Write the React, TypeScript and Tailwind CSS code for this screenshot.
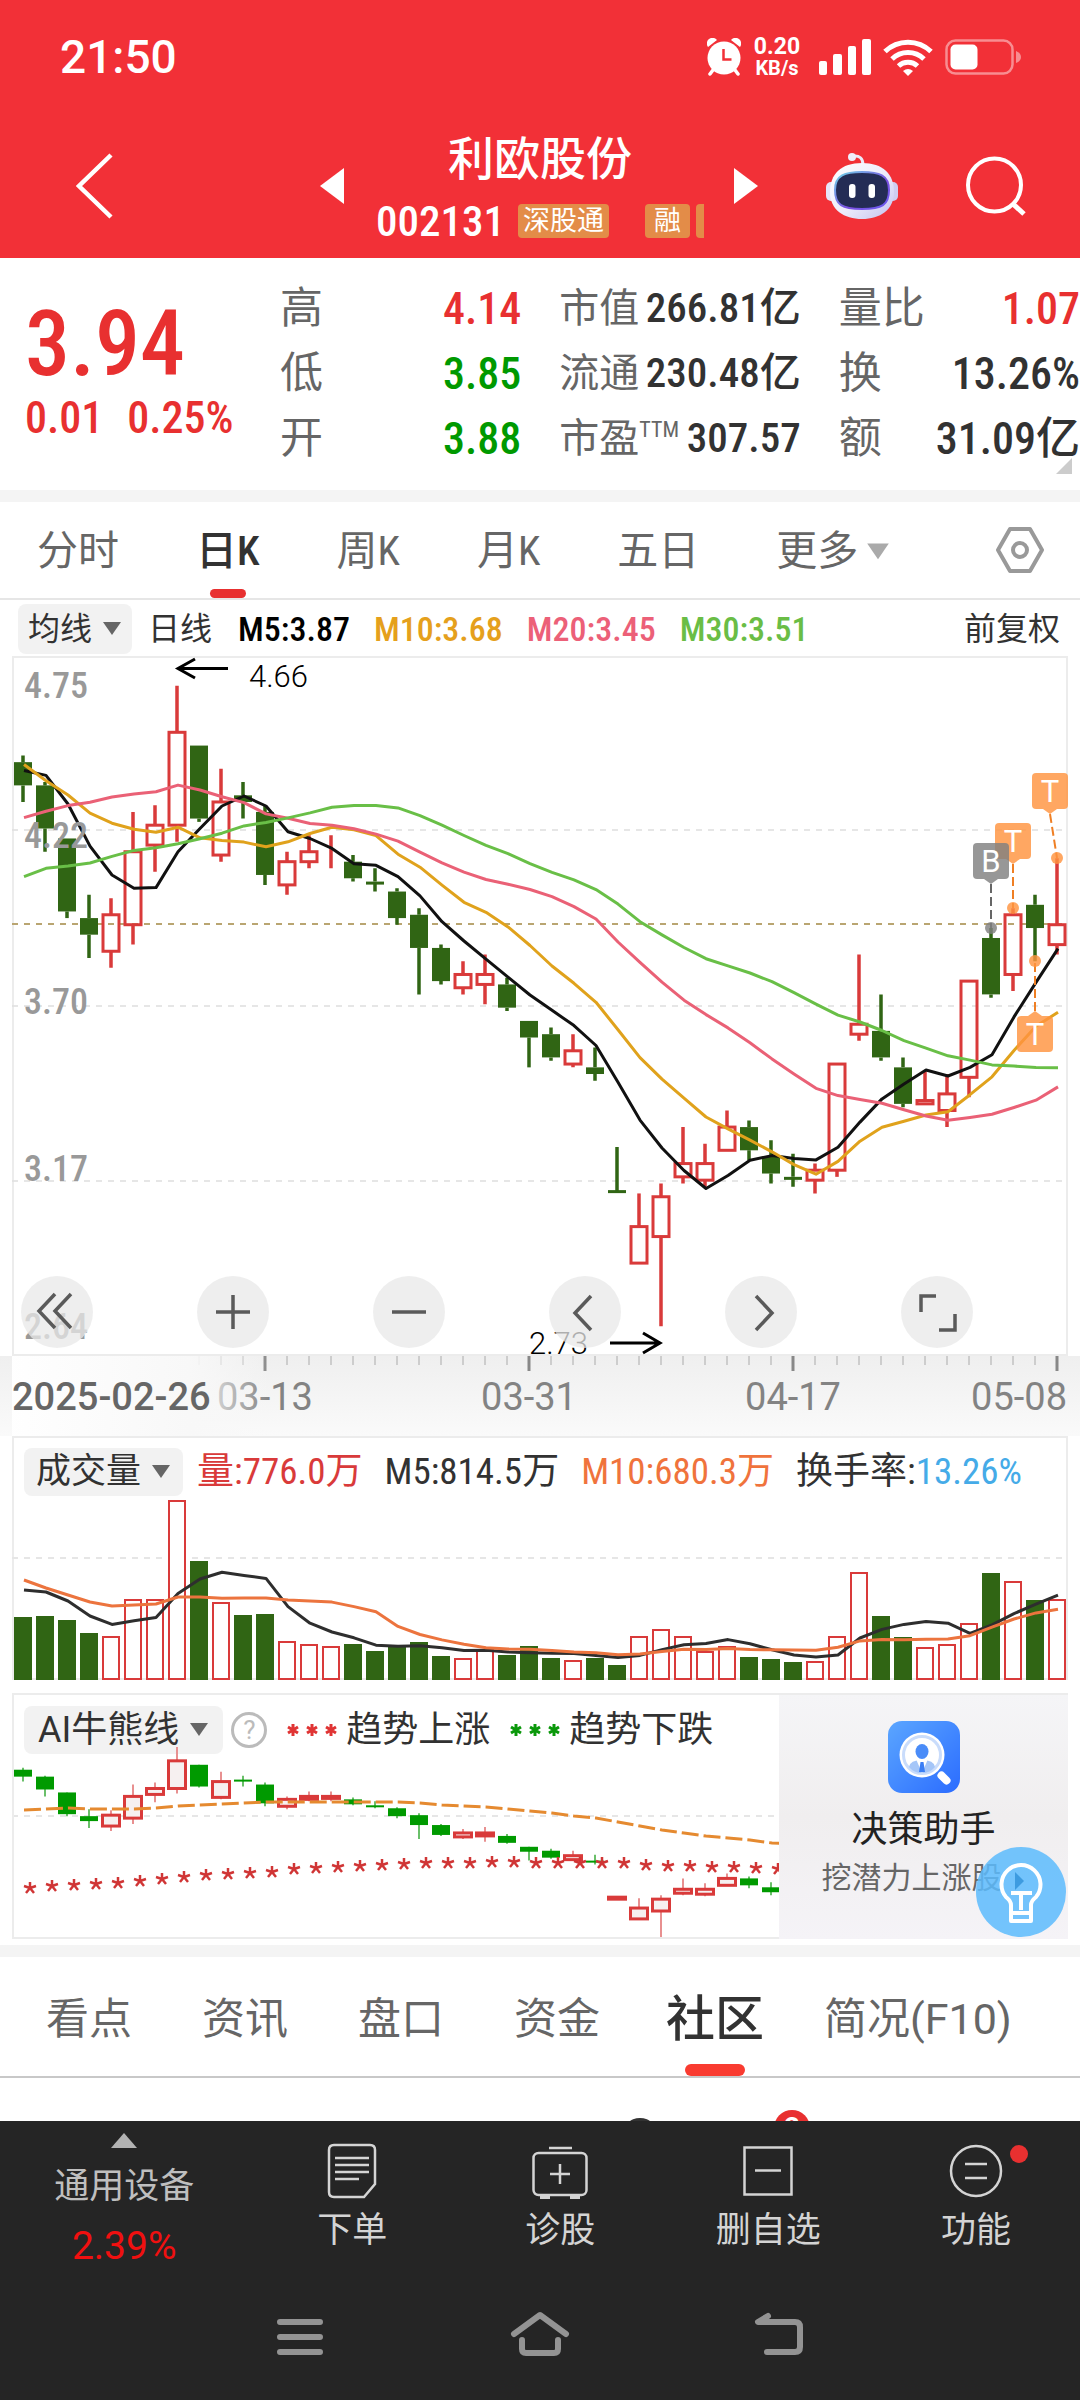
import React from 'react';
import clsx from 'clsx';

type Candle = [open: number, close: number, high: number, low: number];

const STEP = 22;
const WIDTH = 1056;
const RED = '#d93a3a';
const GREEN = '#306514';

const candles: Candle[] = [
  [4.43, 4.36, 4.45, 4.31], [4.36, 4.23, 4.37, 4.16], [4.2, 3.98, 4.2, 3.96], [3.96, 3.91, 4.03, 3.84],
  [3.86, 3.97, 4.02, 3.81], [3.94, 4.16, 4.28, 3.88], [4.18, 4.24, 4.3, 4.1], [4.24, 4.52, 4.66, 4.19],
  [4.48, 4.26, 4.48, 4.25], [4.15, 4.31, 4.41, 4.13], [4.33, 4.31, 4.37, 4.26], [4.28, 4.09, 4.3, 4.06],
  [4.06, 4.13, 4.16, 4.03], [4.13, 4.16, 4.21, 4.11], [4.16, 4.16, 4.21, 4.11], [4.13, 4.08, 4.15, 4.07],
  [4.07, 4.065, 4.11, 4.04], [4.04, 3.96, 4.05, 3.94], [3.97, 3.87, 3.99, 3.73], [3.87, 3.77, 3.88, 3.76],
  [3.75, 3.79, 3.83, 3.73], [3.76, 3.79, 3.85, 3.7], [3.76, 3.69, 3.78, 3.68], [3.65, 3.6, 3.65, 3.51],
  [3.61, 3.54, 3.63, 3.53], [3.52, 3.56, 3.61, 3.51], [3.51, 3.49, 3.57, 3.47], [3.14, 3.135, 3.27, 3.14],
  [2.92, 3.03, 3.13, 2.92], [3.0, 3.12, 3.16, 2.73], [3.18, 3.22, 3.33, 3.16], [3.17, 3.22, 3.28, 3.15],
  [3.26, 3.33, 3.38, 3.26], [3.33, 3.26, 3.35, 3.23], [3.24, 3.19, 3.29, 3.16], [3.18, 3.175, 3.25, 3.15],
  [3.17, 3.2, 3.22, 3.13], [3.2, 3.52, 3.52, 3.18], [3.61, 3.64, 3.85, 3.59], [3.62, 3.54, 3.73, 3.53],
  [3.51, 3.4, 3.54, 3.39], [3.4, 3.41, 3.5, 3.4], [3.38, 3.43, 3.49, 3.33], [3.48, 3.77, 3.77, 3.42],
  [3.9, 3.73, 3.93, 3.72], [3.79, 3.97, 3.99, 3.74], [4.0, 3.93, 4.03, 3.83], [3.88, 3.94, 4.14, 3.85],
];

const volumes = [
  63, 64, 60, 47, 44, 81, 81, 180, 119, 78, 65, 66, 39, 36, 34, 36, 29, 34, 38, 24, 22, 31, 25, 34,
  22, 20, 22, 15, 44, 51, 44, 29, 34, 23, 21, 18, 19, 44, 108, 64, 43, 33, 36, 57, 107, 99, 80, 81,
];

// averages of the days whose window starts before the first candle
const head5 = [4.405, 4.39, 4.304, 4.177];
const head10 = [4.423, 4.374, 4.331, 4.276, 4.246, 4.228, 4.219, 4.234, 4.202];
const head20 = [
  4.263, 4.282, 4.299, 4.309, 4.325, 4.334, 4.341, 4.361, 4.346, 4.326, 4.308, 4.274, 4.261, 4.245, 4.24, 4.229,
  4.213, 4.192, 4.159,
];
const head30 = [
  4.085, 4.11, 4.117, 4.126, 4.146, 4.164, 4.172, 4.184, 4.199, 4.216, 4.238, 4.248, 4.262, 4.277, 4.294, 4.299,
  4.299, 4.292, 4.269, 4.24, 4.209, 4.179, 4.154, 4.124, 4.098, 4.075, 4.046, 4.002, 3.949,
];

const bullLine = [
  116, 115, 114, 115, 115, 115, 114, 112, 111, 110, 109, 108, 108, 108, 108, 108, 108, 108, 109, 111, 112, 113, 115,
  117, 119, 122, 124, 128, 132, 136, 139, 142, 144, 146, 149, 150,
];
const starLine = [
  194, 192, 191, 190, 189, 187, 185, 183, 181, 180, 179, 178, 175, 174, 173, 172, 171, 170, 169, 169, 169, 168, 168,
  169, 169, 169, 169, 169, 171, 172, 172, 173, 173, 174, 175,
];

const x = (i: number) => 11 + STEP * i;
const priceY = (p: number) => (4.75 - p) * 331.75;
const trendY = (p: number) => 53 + (4.66 - p) * 98.8;

function average(values: number[], n: number, first: number[]) {
  return values.map((_, i) =>
    i < first.length ? first[i] : values.slice(i - n + 1, i + 1).reduce((a, b) => a + b, 0) / n
  );
}

function points(values: number[], y: (v: number) => number) {
  return values.map((v, i) => `${x(i) + 1},${y(v).toFixed(1)}`).join(' ');
}

const closes = candles.map((c) => c[1]);
const isUp = (c: Candle) => c[1] >= c[0];

const Caret = ({ className }: { className?: string }) => (
  <svg viewBox="0 0 20 14" className={clsx('h-3.5 w-5', className)} fill="currentColor" aria-hidden="true">
    <path d="M1 0h18L10 13z" />
  </svg>
);

const StatusBar = () => (
  <div className="flex h-[114px] items-center justify-between pl-[60px] pr-[59px]">
    <span className="font-[Roboto] text-[46px] leading-none font-medium">21:50</span>
    <div className="flex items-center">
      <svg viewBox="0 0 34 38" className="h-[38px] w-[34px]">
        <circle cx="17" cy="20" r="16.5" fill="#fff" />
        <path d="M1 9a5.500 5.500 0 0 1 9-7zM33 9a5.500 5.500 0 0 0-9-7z" fill="#fff" />
        <path d="M6 32l-3 4M28 32l3 4" stroke="#fff" strokeWidth="3.500" strokeLinecap="round" />
        <path d="M16.500 11v10.500h8" fill="none" stroke="#f23037" strokeWidth="2.500" />
      </svg>
      <div className="ml-3 flex w-[48px] flex-col text-center font-[Roboto] font-bold">
        <span className="text-[23px] leading-[22px]">0.20</span>
        <span className="text-[20px] leading-[20px]">KB/s</span>
      </div>
      <svg viewBox="0 0 52 36" className="ml-[18px] h-9 w-[52px]" fill="#fff">
        <rect x="0" y="22" width="8" height="14" rx="2" />
        <rect x="14" y="15" width="9" height="21" rx="2" />
        <rect x="29" y="7" width="8" height="29" rx="2" />
        <rect x="43" y="0" width="9" height="36" rx="2" />
      </svg>
      <svg viewBox="0 0 50 38" className="ml-3 h-[38px] w-[50px]" fill="none" stroke="#fff" strokeWidth="5">
        <path d="M2 13.500a33 33 0 0 1 46 0M9 21a23 23 0 0 1 32 0M15.500 28a14 14 0 0 1 19 0" />
        <path d="M20 33q5-4 10 0l-5 5z" fill="#fff" stroke="none" />
      </svg>
      <svg viewBox="0 0 76 36" className="ml-3 h-9 w-[76px]">
        <rect x="1.500" y="1.500" width="66" height="33" rx="9" fill="none" stroke="#fff" strokeOpacity=".45" strokeWidth="2.500" />
        <rect x="5.500" y="5.500" width="27" height="25" rx="5" fill="#fff" />
        <path d="M71 12q5 2 5 6t-5 6z" fill="#fff" fillOpacity=".45" />
      </svg>
    </div>
  </div>
);

const Robot = () => (
  <svg viewBox="0 0 72 68" className="h-[68px] w-[72px]" aria-hidden="true">
    <defs>
      <linearGradient id="shell" x1="0" y1="0" x2="1" y2="1">
        <stop offset="0" stopColor="#fff" />
        <stop offset=".55" stopColor="#ecebfb" />
        <stop offset="1" stopColor="#c3c0ee" />
      </linearGradient>
      <linearGradient id="rim" x1="0" y1="0" x2="1" y2="1">
        <stop offset="0" stopColor="#6fd6e8" />
        <stop offset=".6" stopColor="#7a4fe0" />
        <stop offset="1" stopColor="#6a5cf0" />
      </linearGradient>
    </defs>
    <path d="M27 4q10-1 10 9" fill="none" stroke="#eceaf8" strokeWidth="3" />
    <circle cx="26" cy="5" r="4" fill="#f0eefb" />
    <rect x="0" y="30" width="12" height="19" rx="5" fill="#e6e4f8" />
    <rect x="60" y="30" width="12" height="19" rx="5" fill="#cfccf0" />
    <path d="M36 11c21 0 32 11 32 29S54 67 36 67 4 58 4 40s11-29 32-29z" fill="url(#shell)" />
    <path d="M36 20c17 0 27 3 27 18S56 57 36 57 9 53 9 38s10-18 27-18z" fill="#242c55" stroke="url(#rim)" strokeWidth="2" />
    <rect x="23" y="32" width="6.500" height="14" rx="3" fill="#fff" />
    <rect x="42.500" y="32" width="6.500" height="14" rx="3" fill="#fff" />
  </svg>
);

const TitleBar = () => (
  <div className="flex h-36 items-center">
    <div className="flex flex-1 items-center justify-between pr-2 pl-[76px]">
      <button aria-label="返回">
        <svg viewBox="0 0 38 66" className="h-[66px] w-[38px]" fill="none" stroke="#fff" strokeWidth="4.500">
          <path d="M35 2L3 33l32 31" />
        </svg>
      </button>
      <button aria-label="上一只" className="mr-6">
        <svg viewBox="0 0 24 36" className="h-9 w-6" fill="#fff">
          <path d="M24 0v36L0 18z" />
        </svg>
      </button>
    </div>
    <div className="flex w-[328px] flex-col items-center pt-1.5">
      <h1 className="text-[46px] leading-[64px] font-medium">利欧股份</h1>
      <div className="flex h-[60px] w-full items-center">
        <span className="w-[126px] text-[43px] leading-none font-medium">002131</span>
        <span className="ml-4 w-[91px] rounded-sm bg-[#e38c48] text-center text-[27px] leading-[34px]">深股通</span>
        <span className="ml-9 w-[45px] rounded-sm bg-[#e38c48] text-center text-[27px] leading-[34px]">融</span>
        <span className="ml-1.5 h-[34px] w-2 rounded-l-sm bg-[#e38c48]" />
      </div>
    </div>
    <div className="flex flex-1 items-center justify-between pr-[54px] pl-[30px]">
      <button aria-label="下一只">
        <svg viewBox="0 0 24 36" className="h-9 w-6" fill="#fff">
          <path d="M0 0v36l24-18z" />
        </svg>
      </button>
      <button aria-label="助手">
        <Robot />
      </button>
      <button aria-label="搜索">
        <svg viewBox="0 0 60 60" className="size-[60px]" fill="none" stroke="#fff" strokeWidth="4">
          <circle cx="28.500" cy="29" r="26.500" />
          <path d="M47 48l11 10" strokeWidth="5" />
        </svg>
      </button>
    </div>
  </div>
);

const quotes = [
  [
    { label: '高', value: '4.14', color: 'text-[#e83030]' },
    { label: '低', value: '3.85', color: 'text-[#009900]' },
    { label: '开', value: '3.88', color: 'text-[#009900]' },
  ],
  [
    { label: '市值', value: '266.81亿', color: 'text-[#323232]' },
    { label: '流通', value: '230.48亿', color: 'text-[#323232]' },
    { label: '市盈', sup: 'TTM', value: '307.57', color: 'text-[#323232]' },
  ],
  [
    { label: '量比', value: '1.07', color: 'text-[#e83030]' },
    { label: '换', value: '13.26%', color: 'text-[#323232]' },
    { label: '额', value: '31.09亿', color: 'text-[#323232]' },
  ],
];

const Quote = () => (
  <section className="relative flex h-[232px]">
    <div className="w-[280px] pt-[42px] pl-[25px] font-medium text-[#e83030]">
      <div className="text-[90px] leading-[90px]">3.94</div>
      <div className="flex gap-6 text-[44px] leading-[56px]">
        <span>0.01</span>
        <span>0.25%</span>
      </div>
    </div>
    <div className="grid flex-1 grid-cols-3 gap-x-[38px] pt-[18px]">
      {quotes.map((col, i) => (
        <dl key={i}>
          {col.map(({ label, sup, value, color }) => (
            <div key={label} className="flex h-[65px] items-center justify-between leading-none whitespace-nowrap">
              <dt className={clsx('flex items-start text-[#666]', i === 1 ? 'text-[40px]' : 'text-[43px]')}>
                {label}
                {sup && <span className="text-[22px]">{sup}</span>}
              </dt>
              <dd className={clsx('font-medium', color, i === 1 ? 'text-[41px]' : 'text-[44px]')}>{value}</dd>
            </div>
          ))}
        </dl>
      ))}
    </div>
    <svg viewBox="0 0 16 16" className="absolute right-2 bottom-4 size-4" fill="#ccc">
      <path d="M16 0v16H0z" />
    </svg>
  </section>
);

const periods = ['分时', '日K', '周K', '月K', '五日'];

const PeriodTabs = () => (
  <nav className="flex h-[98px] items-center border-b-2 border-[#e6e6e6] pr-9 pl-[37px] text-[41px] text-[#666]">
    <div className="flex h-full flex-1 items-center gap-[77px]">
      {periods.map((name) => (
        <button
          key={name}
          className={clsx('relative h-full pt-1 whitespace-nowrap', name === '日K' && 'font-medium text-[#323232]')}
        >
          {name}
          {name === '日K' && (
            <span className="absolute bottom-0 left-1/2 h-[9px] w-9 -translate-x-1/2 rounded-full bg-[#e83030]" />
          )}
        </button>
      ))}
      <button className="flex h-full items-center gap-2 pt-1 whitespace-nowrap">
        更多
        <Caret className="h-[18px] w-6 text-[#aaa]" />
      </button>
    </div>
    <button aria-label="设置">
      <svg viewBox="0 0 48 46" className="h-[46px] w-12" fill="none" stroke="#999" strokeWidth="4">
        <path d="M14 2h20l12 21-12 21H14L2 23z" strokeLinejoin="round" />
        <circle cx="24" cy="23" r="7" />
      </svg>
    </button>
  </nav>
);

const AverageBar = () => (
  <div className="flex h-14 items-center pt-0.5 pr-5 pl-[18px] text-[32px] whitespace-nowrap text-[#323232]">
    <button className="flex h-[50px] items-center gap-2.5 rounded-lg bg-[#f2f2f2] px-2.5">
      均线
      <Caret className="text-[#666]" />
    </button>
    <span className="ml-4">日线</span>
    <div className="ml-[26px] flex flex-1 gap-6 text-[34px] font-medium">
      <span className="text-black">M5:3.87</span>
      <span className="text-[#e5a01c]">M10:3.68</span>
      <span className="text-[#ec6078]">M20:3.45</span>
      <span className="text-[#6abd45]">M30:3.51</span>
    </div>
    <button>前复权</button>
  </div>
);

const markers = [
  { text: 'T', bx: 1020, by: 117, dx: 1045, dy: 202 },
  { text: 'T', bx: 983, by: 167, dx: 1001, dy: 252 },
  { text: 'B', bx: 961, by: 187, dx: 979, dy: 272 },
  { text: 'T', bx: 1005, by: 360, dx: 1023, dy: 305 },
];

const controls = [
  { label: '最早', d: 'M34 18L18 35l16 17M50 18L34 35l16 17' },
  { label: '放大', d: 'M36 19v34M19 36h34' },
  { label: '缩小', d: 'M19 36h34' },
  { label: '左移', d: 'M42 20L26 37l16 17' },
  { label: '右移', d: 'M31 20l16 17-16 17' },
  { label: '全屏', d: 'M35 20H20v16M54 38v16H38' },
];

const PriceChart = () => (
  <div className="relative mx-3 border-2 border-[#ececec]">
    <svg viewBox={`0 0 ${WIDTH} 700`} className="-m-0.5 block w-[calc(100%+4px)] overflow-visible">
      {[174, 350, 525].map((y) => (
        <line key={y} x1="0" x2={WIDTH} y1={y} y2={y} stroke="#dedede" strokeWidth="1.500" strokeDasharray="6 6" />
      ))}
      <line x1="0" x2={WIDTH} y1="268" y2="268" stroke="#b9a571" strokeWidth="2" strokeDasharray="6 6" />
      {candles.map((c, i) => {
        const up = isUp(c);
        const color = up ? RED : GREEN;
        const top = priceY(Math.max(c[0], c[1]));
        const bottom = priceY(Math.min(c[0], c[1]));
        return (
          <g key={i}>
            <path
              d={`M${x(i)} ${priceY(c[2])}V${top}M${x(i)} ${bottom}V${priceY(c[3])}`}
              stroke={color}
              strokeWidth="3.500"
            />
            {up ? (
              <rect x={x(i) - 8} y={top} width="16" height={bottom - top} fill="none" stroke={color} strokeWidth="3" />
            ) : (
              <rect x={x(i) - 9} y={top} width="18" height={Math.max(bottom - top, 3)} fill={color} />
            )}
          </g>
        );
      })}
      <g fill="none" strokeWidth="3" strokeLinejoin="round">
        <polyline points={points(average(closes, 5, head5), priceY)} stroke="#111" />
        <polyline points={points(average(closes, 10, head10), priceY)} stroke="#e0a21c" />
        <polyline points={points(average(closes, 20, head20), priceY)} stroke="#ea6176" />
        <polyline points={points(average(closes, 30, head30), priceY)} stroke="#69bf47" />
      </g>
      <g fill="#999" className="text-[36px] font-medium">
        <text x="12" y="42">4.75</text>
        <text x="12" y="192">4.22</text>
        <text x="12" y="358">3.70</text>
        <text x="12" y="525">3.17</text>
        <text x="12" y="683">2.64</text>
      </g>
      <g fill="none" stroke="#000" strokeWidth="3">
        <path d="M216 12.500h-50M183 3l-17 9.500 17 9.500" />
        <path d="M598 687h50M631 677l17 10-17 10" />
      </g>
      <g className="font-[Roboto] text-[31px] font-light">
        <text x="237" y="31">4.66</text>
        <text x="517" y="698">2.73</text>
      </g>
      {markers.map(({ text, bx, by, dx, dy }) => {
        const gray = text === 'B';
        const below = by > dy;
        const fill = gray ? '#808080' : '#ff9440';
        const cx = bx + 18;
        const edge = below ? by : by + 36;
        const tip = below ? by - 5 : by + 41;
        return (
          <g key={bx}>
            <line x1={cx} y1={tip} x2={dx} y2={dy} stroke={gray ? '#666' : '#ef7f24'} strokeWidth="2" strokeDasharray="9 4" />
            <g fill={fill} fillOpacity=".82">
              <circle cx={dx} cy={dy} r="6" />
              <rect x={bx} y={by} width="36" height="36" rx="4" />
              <path d={`M${cx - 7} ${edge}L${cx} ${tip}L${cx + 7} ${edge}z`} />
            </g>
            <text x={cx} y={by + 29} textAnchor="middle" fill="#fff" className="font-[Roboto] text-[31px]">
              {text}
            </text>
          </g>
        );
      })}
    </svg>
    <div className="absolute bottom-1.5 left-[7px] flex gap-[104px]">
      {controls.map(({ label, d }) => (
        <button key={label} aria-label={label} className="size-[72px] rounded-full bg-[#e8e8e8]/75">
          <svg viewBox="0 0 72 72" fill="none" stroke="#5a5a5a" strokeWidth="3.500">
            <path d={d} />
          </svg>
        </button>
      ))}
    </div>
  </div>
);

const DateAxis = () => (
  <div className="bg-linear-to-b from-[#efefef] to-[#fafafa] px-3">
    <svg viewBox={`0 0 ${WIDTH} 80`} className="block w-full">
      <defs>
        <linearGradient id="fade">
          <stop offset="0" stopColor="#fff" />
          <stop offset=".7" stopColor="#f8f8f8" />
          <stop offset="1" stopColor="#f8f8f8" stopOpacity="0" />
        </linearGradient>
      </defs>
      {candles.map((_, i) => {
        const major = i % 12 === 11;
        return (
          <line
            key={i}
            x1={x(i)}
            x2={x(i)}
            y1="0"
            y2={major ? 15 : 9}
            stroke={major ? '#888' : '#aaa'}
            strokeWidth={major ? 3 : 1}
          />
        );
      })}
      <g fill="#838383" className="font-[Roboto] text-[38px]">
        <text x="205" y="54">03-13</text>
        <text x="517" y="54" textAnchor="middle">03-31</text>
        <text x="781" y="54" textAnchor="middle">04-17</text>
        <text x="1055" y="54" textAnchor="end">05-08</text>
      </g>
      <rect x="-12" y="0" width="270" height="80" fill="url(#fade)" />
      <text x="0" y="54" fill="#666" className="font-[Roboto] text-[38px] font-medium">
        2025-02-26
      </text>
    </svg>
  </div>
);

const VolumeChart = () => (
  <section className="mx-3 border-2 border-[#ececec]">
    <div className="flex h-[60px] items-center pt-2 pl-2.5 text-[35px] whitespace-nowrap text-[#323232]">
      <button className="flex h-12 items-center gap-2.5 rounded-lg bg-[#f2f2f2] px-3">
        成交量
        <Caret className="text-[#666]" />
      </button>
      <div className="ml-3.5 flex gap-[22px] text-[37px]">
        <span className="text-[#d93a3a]">量:776.0万</span>
        <span>M5:814.5万</span>
        <span className="text-[#f0733c]">M10:680.3万</span>
        <span>
          换手率:<span className="text-[#45abe8]">13.26%</span>
        </span>
      </div>
    </div>
    <svg viewBox={`0 0 ${WIDTH} 182`} className="-mx-0.5 -mb-0.5 block w-[calc(100%+4px)]">
      <line x1="0" x2={WIDTH} y1="60" y2="60" stroke="#e6e6e6" strokeWidth="2" strokeDasharray="6 6" />
      {volumes.map((v, i) =>
        isUp(candles[i]) ? (
          <rect key={i} x={x(i) - 8} y={183 - v} width="16" height={v - 2} fill="#fff" stroke={RED} strokeWidth="2" />
        ) : (
          <rect key={i} x={x(i) - 9} y={182 - v} width="18" height={v} fill={GREEN} />
        )
      )}
      <g fill="none" strokeWidth="3" strokeLinejoin="round">
        <polyline points={points(average(volumes, 5, [90, 88, 79, 64]), (v) => 182 - v)} stroke="#2e2e2e" />
        <polyline
          points={points(average(volumes, 10, [100, 92, 85, 78, 74, 75, 76, 83, 83]), (v) => 182 - v)}
          stroke="#ec743e"
        />
      </g>
    </svg>
  </section>
);

const Stars = ({ color }: { color: string }) => (
  <svg viewBox="0 0 51 14" className="h-3.5 w-[51px]" stroke={color} strokeWidth="3">
    {[6, 25, 44].map((cx) => (
      <path key={cx} d={`M${cx} 1v12M${cx - 5} 4l10 6M${cx + 5} 4l-10 6`} />
    ))}
  </svg>
);

const TrendChart = () => (
  <section className="relative mx-3 mt-[13px] flex border-2 border-[#ececec]">
    <div className="flex-1 overflow-hidden">
      <div className="flex h-[59px] items-end pl-2.5 font-['Roboto','Noto_Sans_CJK_SC'] text-[36px] whitespace-nowrap text-[#323232]">
        <button className="flex h-12 items-center gap-2.5 rounded-lg bg-[#f2f2f2] px-3.5">
          AI牛熊线
          <Caret className="text-[#666]" />
        </button>
        <div className="flex h-12 flex-1 items-center pl-2">
          <button
            aria-label="说明"
            className="size-9 rounded-full border-[3px] border-[#bbb] text-[26px] leading-[30px] text-[#bbb]"
          >
            ?
          </button>
          <span className="ml-5 flex items-center gap-2">
            <Stars color="#e03434" />
            趋势上涨
          </span>
          <span className="ml-5 flex items-center gap-2">
            <Stars color="#0a980a" />
            趋势下跌
          </span>
        </div>
      </div>
      <svg viewBox="0 60 767 183" className="-ml-0.5 block w-[calc(100%+2px)] overflow-visible">
        <line x1="0" x2="767" y1="122" y2="122" stroke="#e6e6e6" strokeWidth="2" strokeDasharray="6 6" />
        {candles.slice(0, 35).map((c, i) => {
          const up = isUp(c) || i === 27;
          const top = trendY(Math.max(c[0], c[1]));
          const height = trendY(Math.min(c[0], c[1])) - top;
          return (
            <g key={i}>
              {i !== 27 && (
                <line
                  x1={x(i)}
                  x2={x(i)}
                  y1={trendY(c[2])}
                  y2={trendY(c[3])}
                  stroke={up ? '#e89090' : '#6abf6a'}
                  strokeWidth="2"
                />
              )}
              {up ? (
                <rect
                  x={x(i) - 8.5}
                  y={top}
                  width="17"
                  height={Math.max(height, 2)}
                  fill="#f6f0f0"
                  stroke={RED}
                  strokeWidth="3"
                />
              ) : (
                <rect x={x(i) - 9} y={top} width="18" height={Math.max(height, 2)} fill="#009a00" />
              )}
            </g>
          );
        })}
        <polyline points={points(bullLine, (v) => v)} fill="none" stroke="#e58a30" strokeWidth="3" strokeDasharray="17 5" />
        {starLine.map((y, i) => (
          <path
            key={i}
            transform={`translate(${x(i) + 7} ${y})`}
            d="M0 0v-6M0 0l6-2M0 0l4 5M0 0l-4 5M0 0l-6-2"
            stroke="#d03535"
            strokeWidth="2.500"
          />
        ))}
      </svg>
    </div>
    <a
      href="#assistant"
      className="-mr-0.5 -mb-0.5 flex w-[289px] flex-col items-center bg-linear-to-b from-[#f5f5f7] via-[#f0eeef] to-[#f5f3f7] pt-[26px]"
    >
      <svg viewBox="0 0 72 72" className="size-[72px]">
        <defs>
          <linearGradient id="app" x1="0" y1="0" x2="1" y2="1">
            <stop offset="0" stopColor="#5ba6ff" />
            <stop offset="1" stopColor="#2b6cff" />
          </linearGradient>
        </defs>
        <rect width="72" height="72" rx="14" fill="url(#app)" />
        <circle cx="34" cy="34" r="22.500" fill="#fff" />
        <circle cx="34" cy="34" r="18.500" fill="#fff" stroke="#c9dcfb" strokeWidth="3" />
        <path d="M21 46q1-7 13-7t13 7q-5 6-13 6t-13-6z" fill="#a5c6f8" />
        <path d="M28 38l6 14 6-14z" fill="#fff" />
        <path d="M32.500 41h3l1.500 10h-6z" fill="#3a7ef5" />
        <ellipse cx="34" cy="30.500" rx="6.500" ry="7.500" fill="#4a8cf8" />
        <path d="M53.500 54.500l5 5" stroke="#fff" strokeWidth="8" strokeLinecap="round" />
      </svg>
      <span className="mt-3.5 text-[36px] leading-[46px] text-[#222]">决策助手</span>
      <span className="mt-1 mr-6 text-[30px] leading-[42px] text-[#666]">挖潜力上涨股</span>
    </a>
    <button aria-label="提示" className="absolute right-0 bottom-0 size-[90px] rounded-full bg-[#5cbbfd]/85">
      <svg viewBox="0 0 90 90" fill="none" stroke="#fff" strokeWidth="4" strokeLinejoin="round">
        <path d="M39 25l9 9-9 9z" fill="#3d9be0" stroke="none" />
        <path d="M35 66V58q0-4-5-8a19.500 19.500 0 1 1 30 0q-5 4-5 8v16H35v-8h20M45 63V46M35 46h21" />
      </svg>
    </button>
  </section>
);

const sections = ['看点', '资讯', '盘口', '资金', '社区', '简况(F10)'];

const SectionTabs = () => (
  <nav className="flex h-[121px] gap-[70px] border-b-2 border-[#c8c8c8] pl-[46px] font-['Roboto','Noto_Sans_CJK_SC'] text-[43px] whitespace-nowrap text-[#666]">
    {sections.map((name) => {
      const active = name === '社区';
      return (
        <button
          key={name}
          className={clsx('relative h-full pt-1.5', active && '-mr-2.5 -ml-1 text-[49px] font-medium text-[#323232]')}
        >
          {name}
          {active && (
            <span className="absolute bottom-0 left-1/2 h-3 w-[60px] -translate-x-1/2 rounded-full bg-[#f93b30]" />
          )}
        </button>
      );
    })}
  </nav>
);

// top edge of the community list, cut off by the tool bar
const CommunityPeek = () => (
  <div className="flex h-[43px] items-start overflow-hidden pl-[622px]">
    <span className="mt-10 size-9 shrink-0 rounded-full bg-[#323232]" />
    <span className="mt-8 ml-[116px] size-9 shrink-0 rounded-full bg-[#e83030] text-center font-[Roboto] text-[28px] leading-9 font-bold text-white">
      2
    </span>
  </div>
);

const tools = [
  {
    label: '下单',
    icon: (
      <>
        <path d="M10 4h36q5 0 5 5v34L40 56H10q-5 0-5-5V9q0-5 5-5z" />
        <path d="M11 17h34M11 24h34M11 31h34M11 38h24" />
      </>
    ),
  },
  {
    label: '诊股',
    icon: (
      <>
        <rect x="1.500" y="12" width="53" height="42" rx="5" />
        <path d="M17 7h23M28 23v20M18 33h20" />
        <path d="M8 56h10M38 56h10" strokeWidth="4" />
      </>
    ),
  },
  {
    label: '删自选',
    icon: (
      <>
        <rect x="4.500" y="6.500" width="47" height="47" />
        <path d="M15 29.500h26" />
      </>
    ),
  },
  {
    label: '功能',
    icon: (
      <>
        <circle cx="28" cy="30" r="25" />
        <path d="M17 23h22M17 37h22" />
      </>
    ),
  },
];

const ToolBar = () => (
  <footer className="bg-[#252525]">
    <div className="flex h-[152px] text-[35px] text-[#d4d4d4]">
      <button className="flex w-[23%] flex-col items-center pt-3 text-[#bfbfbf]">
        <svg viewBox="0 0 26 15" className="h-[15px] w-[26px] shrink-0" fill="#b3b3b3">
          <path d="M13 0l13 15H0z" />
        </svg>
        <span className="mt-3 leading-[54px]">通用设备</span>
        <span className="font-[Roboto] text-[39px] leading-[64px] text-[#f01010]">2.39%</span>
      </button>
      {tools.map(({ label, icon }) => (
        <button key={label} className="relative flex flex-1 flex-col items-center pt-5">
          <svg viewBox="0 0 56 60" className="h-[60px] w-14" fill="none" stroke="#d4d4d4" strokeWidth="2.500">
            {icon}
          </svg>
          <span className="leading-[60px]">{label}</span>
          {label === '功能' && (
            <span className="absolute top-6 left-1/2 ml-[34px] size-[18px] rounded-full bg-[#e83030]" />
          )}
        </button>
      ))}
    </div>
    <div className="flex h-[127px] items-center justify-center gap-[184px]">
      <button aria-label="菜单">
        <svg viewBox="0 0 56 44" className="h-11 w-14" stroke="#939393" strokeWidth="6" strokeLinecap="round">
          <path d="M8 7h40M8 22h40M8 37h40" />
        </svg>
      </button>
      <button aria-label="主页">
        <svg
          viewBox="0 0 56 44"
          className="h-11 w-14 overflow-visible"
          fill="none"
          stroke="#939393"
          strokeWidth="6"
          strokeLinecap="round"
          strokeLinejoin="round"
        >
          <path d="M2 19L28 0l26 19M10 25v9q0 4 4 4h28q4 0 4-4v-9" />
        </svg>
      </button>
      <button aria-label="返回">
        <svg
          viewBox="0 0 56 44"
          className="h-11 w-14 overflow-visible"
          fill="none"
          stroke="#939393"
          strokeWidth="6"
          strokeLinecap="round"
          strokeLinejoin="round"
        >
          <path d="M16 1L6 7h37q5 0 5 5v20q0 5-5 5H15" />
        </svg>
      </button>
    </div>
  </footer>
);

export default function App() {
  return (
    <main className="w-full overflow-hidden bg-white font-['Roboto_Condensed','Noto_Sans_CJK_SC',sans-serif]">
      <header className="bg-[#f23037] text-white">
        <StatusBar />
        <TitleBar />
      </header>
      <Quote />
      <div className="h-3 bg-[#f4f4f4]" />
      <PeriodTabs />
      <AverageBar />
      <PriceChart />
      <DateAxis />
      <VolumeChart />
      <TrendChart />
      <div className="mt-1.5 h-3 bg-[#f4f4f4]" />
      <SectionTabs />
      <CommunityPeek />
      <ToolBar />
    </main>
  );
}
